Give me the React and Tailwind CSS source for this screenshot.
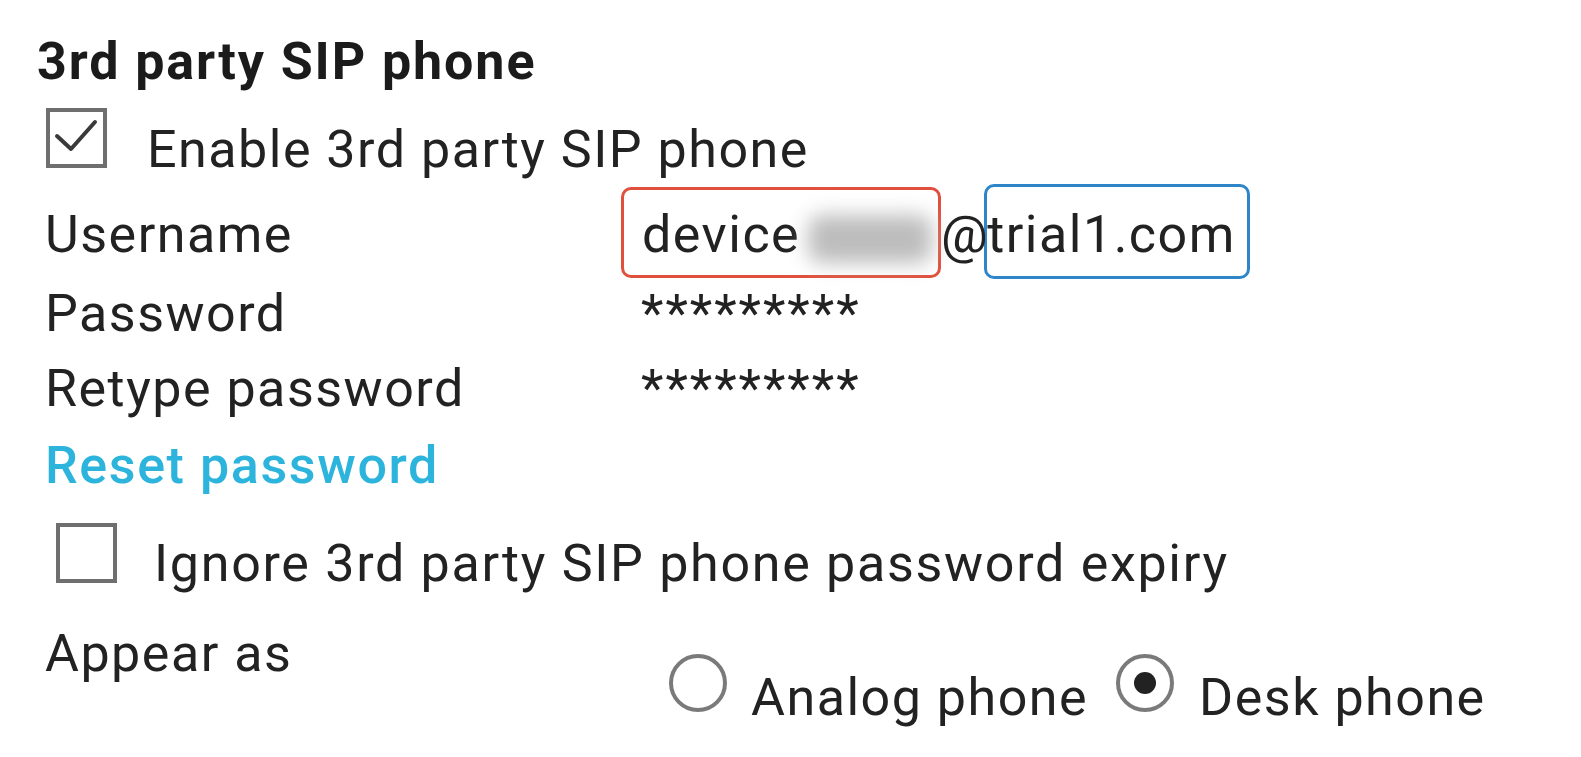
function Checkbox({ checked, className = "" }) {
  return (
    <div className={"relative shrink-0 w-[61px] h-[60px] border-[4px] border-[#6f6f6f] bg-white " + className}>
      {checked && (
        <svg className="absolute left-0 top-0" width="53" height="52" viewBox="0 0 53 52">
          <polyline points="7,24 21,37 45,10" fill="none" stroke="#3a3a3a" strokeWidth="4" strokeLinecap="round" strokeLinejoin="round" />
        </svg>
      )}
    </div>
  );
}

function Radio({ checked }) {
  return (
    <svg className="shrink-0" width="60" height="60" viewBox="0 0 60 60">
      <circle cx="30" cy="30" r="27" fill="white" stroke="#7a7a7a" strokeWidth="4" />
      {checked && <circle cx="30" cy="30" r="11" fill="#222" />}
    </svg>
  );
}

export default function App() {
  return (
    <div className="min-h-screen w-full bg-white text-[#222] font-['Roboto',sans-serif] text-[52px] leading-[60px] tracking-[1.5px] whitespace-nowrap">
      <div className="pl-[37px] pt-[32px]">
        <h2 className="font-bold h-[60px] tracking-[1.9px] text-[#1b1b1b]">3rd party SIP phone</h2>
      </div>

      <div className="pl-[46px] flex items-start h-[88px]">
        <Checkbox checked className="mt-[16px]" />
        <span className="ml-[40px] mt-[28px]">Enable 3rd party SIP phone</span>
      </div>

      <div className="pl-[45px] flex items-start h-[100px]">
        <span className="w-[576px] shrink-0 mt-[25px]">Username</span>
        <div className="flex items-start">
          <div className="mt-[7px] h-[91px] w-[320px] border-[3px] border-[#e0503c] rounded-[10px] pl-[18px] pt-[15px] flex items-start">
            <span>device</span>
            <div className="ml-[8px] mt-[10px] w-[124px] h-[48px] rounded-[14px] bg-[#bdbdbd] blur-[10px]" />
          </div>
          <span className="mt-[25px] relative z-10">@</span>
          <div className="-ml-[5px] mt-[4px] h-[95px] border-[3px] border-[#2e86c8] rounded-[10px] pt-[18px] pr-[11px]">
            trial1.com
          </div>
        </div>
      </div>

      <div className="pl-[45px] flex items-start mt-[4px] h-[60px]">
        <span className="w-[596px] shrink-0">Password</span>
        <span className="tracking-[2px]">*********</span>
      </div>

      <div className="pl-[45px] flex items-start mt-[15px] h-[60px]">
        <span className="w-[596px] shrink-0">Retype password</span>
        <span className="tracking-[2px]">*********</span>
      </div>

      <div className="pl-[45px] mt-[17px] h-[60px]">
        <a className="text-[#2cb4dc] font-medium tracking-[1.6px]">Reset password</a>
      </div>

      <div className="pl-[56px] flex items-start h-[98px]">
        <Checkbox className="mt-[27px]" />
        <span className="ml-[37px] tracking-[1.7px] mt-[38px]">Ignore 3rd party SIP phone password expiry</span>
      </div>

      <div className="pl-[45px] flex items-start h-[163px]">
        <span className="w-[623px] shrink-0 mt-[30px]">Appear as</span>
        <div className="flex items-start mt-[59px]">
          <Radio />
          <span className="ml-[23px] mt-[15px]">Analog phone</span>
          <div className="ml-[27px]">
            <Radio checked />
          </div>
          <span className="ml-[24px] mt-[15px]">Desk phone</span>
        </div>
      </div>
    </div>
  );
}
